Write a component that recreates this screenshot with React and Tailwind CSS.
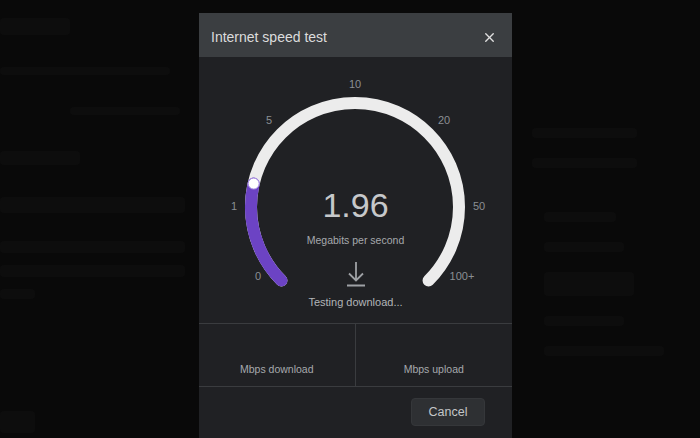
import { X } from 'lucide-react';

const CX = 156;
const CY = 150;
const R = 104;

function pt(deg) {
  const a = (deg * Math.PI) / 180;
  return [CX + R * Math.sin(a), CY - R * Math.cos(a)];
}

function arc(from, to) {
  const [x1, y1] = pt(from);
  const [x2, y2] = pt(to);
  const large = to - from > 180 ? 1 : 0;
  return `M ${x1.toFixed(2)} ${y1.toFixed(2)} A ${R} ${R} 0 ${large} 1 ${x2.toFixed(2)} ${y2.toFixed(2)}`;
}

const ticks = [
  { label: '10', x: 156, y: 28 },
  { label: '5', x: 70, y: 64 },
  { label: '20', x: 245, y: 64 },
  { label: '1', x: 35, y: 150 },
  { label: '50', x: 280, y: 150 },
  { label: '0', x: 59, y: 220 },
  { label: '100+', x: 263, y: 220 },
];

const needle = -77;

function Gauge() {
  const [dx, dy] = pt(needle);
  return (
    <div className="relative h-[266px]">
      <svg width="313" height="266" className="absolute inset-0">
        <path d={arc(-135, 135)} fill="none" stroke="#ececec" strokeWidth="12" strokeLinecap="round" />
        <path d={arc(-135, needle)} fill="none" stroke="#6c43c4" strokeWidth="12" strokeLinecap="round" />
        <circle cx={dx} cy={dy} r="5.5" fill="#ffffff" stroke="#a58be0" strokeWidth="1" />
        {ticks.map((t) => (
          <text
            key={t.label}
            x={t.x}
            y={t.y}
            textAnchor="middle"
            dominantBaseline="middle"
            fill="#8b8f93"
            fontSize="11"
            fontFamily="'Liberation Sans', Arial, sans-serif"
          >
            {t.label}
          </text>
        ))}
      </svg>
      <div className="absolute left-0 right-0 top-[128px] flex flex-col items-center">
        <div className="text-[34px] leading-[40px] text-[#c6c8ca]">1.96</div>
        <div className="mt-2 text-[10.5px] leading-[14px] text-[#a6a9ad]">Megabits per second</div>
        <svg width="20" height="26" viewBox="0 0 20 26" className="mt-[14px]">
          <path d="M10 1 V19.5 M3 12.5 L10 19.5 L17 12.5 M1 24.5 H19" fill="none" stroke="#9ea1a5" strokeWidth="1.8" />
        </svg>
        <div className="mt-2 text-[11px] leading-[14px] text-[#b2b5b8]">Testing download...</div>
      </div>
    </div>
  );
}

function Faint({ className }) {
  return <div className={`rounded-sm bg-[#0d0d0d] ${className}`} />;
}

export default function App() {
  return (
    <div className="relative h-[438px] w-[700px] overflow-hidden bg-[#090909] font-['Liberation_Sans',Arial,sans-serif]">
      {/* dimmed page behind the dialog */}
      <div className="flex gap-8 pt-[18px]">
        <div className="flex w-[190px] flex-col gap-3">
          <Faint className="h-[17px] w-[70px]" />
          <Faint className="mt-5 h-[8px] w-[170px]" />
          <Faint className="mt-5 ml-[70px] h-[8px] w-[110px]" />
          <Faint className="mt-6 h-[14px] w-[80px]" />
          <Faint className="mt-5 h-[16px] w-[185px]" />
          <Faint className="mt-4 h-[12px] w-[185px]" />
          <Faint className="h-[12px] w-[185px]" />
          <Faint className="h-[10px] w-[35px]" />
          <Faint className="mt-[100px] h-[22px] w-[35px]" />
        </div>
        <div className="ml-[310px] mt-[110px] flex w-[150px] flex-col gap-5">
          <Faint className="h-[10px] w-[105px]" />
          <Faint className="h-[10px] w-[105px]" />
          <Faint className="ml-3 mt-6 h-[10px] w-[72px]" />
          <Faint className="ml-3 h-[10px] w-[80px]" />
          <Faint className="ml-3 h-[24px] w-[90px]" />
          <Faint className="ml-3 h-[10px] w-[80px]" />
          <Faint className="ml-3 h-[10px] w-[120px]" />
        </div>
      </div>

      {/* dialog */}
      <div className="absolute left-[199px] top-[13px] flex h-[440px] w-[313px] flex-col bg-[#202124]">
        <div className="flex h-[44px] items-center justify-between bg-[#3b3e41] pl-3 pr-[15px] pt-1">
          <span className="text-[14px] text-[#dcdcdc]">Internet speed test</span>
          <X className="h-[15px] w-[15px] text-[#e0e0e0]" strokeWidth={2.2} />
        </div>
        <Gauge />
        <div className="grid h-[64px] grid-cols-2 border-y border-[#3a3c3f]">
          <div className="flex items-end justify-center border-r border-[#3a3c3f] pb-[8px] text-[10.5px] text-[#a6a9ad]">
            Mbps download
          </div>
          <div className="flex items-end justify-center pb-[8px] text-[10.5px] text-[#a6a9ad]">Mbps upload</div>
        </div>
        <div className="flex justify-end pr-[27px] pt-[11px]">
          <button className="h-[28px] w-[74px] rounded border border-[#35373a] bg-[#2e3033] text-[12.5px] text-[#c4c6c8]">
            Cancel
          </button>
        </div>
      </div>
    </div>
  );
}
